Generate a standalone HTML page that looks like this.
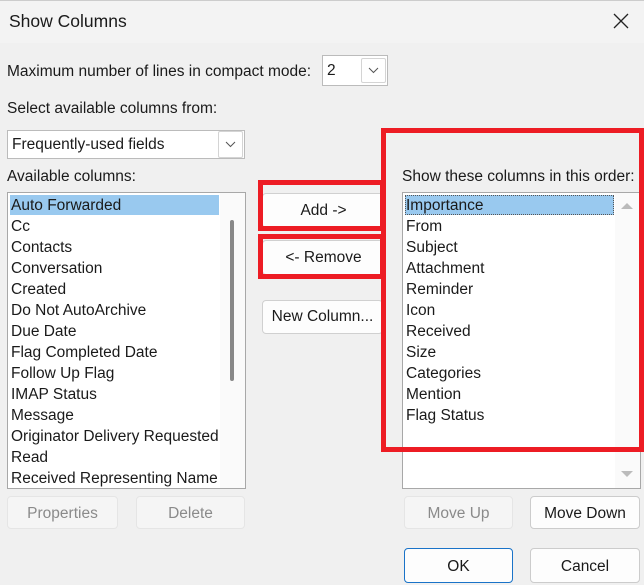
<!DOCTYPE html>
<html><head><style>
*{box-sizing:border-box;margin:0;padding:0}
body{width:644px;height:585px;background:#f0f0f0;font-family:"Liberation Sans",sans-serif;font-size:15.5px;color:#1a1a1a;position:relative;overflow:hidden}
.a{position:absolute}
.t{position:absolute;white-space:nowrap;line-height:20px}
.btn{position:absolute;background:#fdfdfd;border:1px solid #d0d0d0;border-radius:4px;text-align:center;font-size:15.5px}
.dis{background:#f5f5f5;color:#8a8a8a;border-color:#e5e5e5}
.red{position:absolute;border:5px solid #ed1c24}
.list{position:absolute;background:#fff;border:1px solid #a8a8a8}
.row{position:absolute;left:3px;height:21px;line-height:23px;white-space:nowrap}
.chev{position:absolute;border:1px solid #d4d4d4;border-radius:2px;background:#fff}
</style></head><body>
<div class="a" style="left:0;top:0;width:644px;height:43px;background:#f3f3f3;border-top:1px solid #ccc"></div>
<div class="t" style="left:9px;top:11px;font-size:17.5px">Show Columns</div>
<svg class="a" style="left:613px;top:13px" width="16" height="16"><path d="M1 1L15 15M15 1L1 15" stroke="#222" stroke-width="1.3"/></svg>

<div class="t" style="left:7px;top:62px">Maximum number of lines in compact mode:</div>
<div class="a" style="left:322px;top:55px;width:66px;height:31px;background:#fff;border:1px solid #bbb"></div>
<div class="t" style="left:327px;top:61px">2</div>
<div class="chev" style="left:361px;top:58px;width:25px;height:25px"><svg width="23" height="23"><path d="M7 9L11.5 13.5L16 9" fill="none" stroke="#555" stroke-width="1"/></svg></div>

<div class="t" style="left:7px;top:99px">Select available columns from:</div>
<div class="a" style="left:7px;top:130px;width:238px;height:29px;background:#fff;border:1px solid #bbb"></div>
<div class="t" style="left:12px;top:135px">Frequently-used fields</div>
<div class="chev" style="left:218px;top:131px;width:25px;height:27px"><svg width="23" height="25"><path d="M7 10L11.5 14.5L16 10" fill="none" stroke="#555" stroke-width="1"/></svg></div>

<div class="t" style="left:7px;top:167px">Available columns:</div>
<div class="list" style="left:7px;top:192px;width:239px;height:297px;overflow:hidden">
<div class="a" style="left:2px;top:2px;width:209px;height:20px;background:#99c9ef"></div>
<div class="row" style="top:1px">Auto Forwarded</div>
<div class="row" style="top:22px">Cc</div>
<div class="row" style="top:43px">Contacts</div>
<div class="row" style="top:64px">Conversation</div>
<div class="row" style="top:85px">Created</div>
<div class="row" style="top:106px">Do Not AutoArchive</div>
<div class="row" style="top:127px">Due Date</div>
<div class="row" style="top:148px">Flag Completed Date</div>
<div class="row" style="top:169px">Follow Up Flag</div>
<div class="row" style="top:190px">IMAP Status</div>
<div class="row" style="top:211px">Message</div>
<div class="row" style="top:232px;width:208px;overflow:hidden">Originator Delivery Requested</div>
<div class="row" style="top:253px">Read</div>
<div class="row" style="top:274px">Received Representing Name</div>
<div class="a" style="left:212px;top:0;width:25px;height:296px;background:#fafafa"></div>
<div class="a" style="left:222px;top:27px;width:4px;height:161px;background:#888;border-radius:2px"></div>
</div>

<div class="btn" style="left:262px;top:193px;width:123px;height:35px;line-height:33px">Add -&gt;</div>
<div class="btn" style="left:262px;top:240px;width:123px;height:35px;line-height:33px">&lt;- Remove</div>
<div class="btn" style="left:262px;top:300px;width:121px;height:34px;line-height:32px">New Column...</div>

<div class="t" style="left:402px;top:167px">Show these columns in this order:</div>
<div class="list" style="left:402px;top:192px;width:239px;height:297px;overflow:hidden">
<div class="a" style="left:2px;top:2px;width:209px;height:20px;background:#99c9ef;border:1px dotted #555"></div>
<div class="row" style="top:1px">Importance</div>
<div class="row" style="top:22px">From</div>
<div class="row" style="top:43px">Subject</div>
<div class="row" style="top:64px">Attachment</div>
<div class="row" style="top:85px">Reminder</div>
<div class="row" style="top:106px">Icon</div>
<div class="row" style="top:127px">Received</div>
<div class="row" style="top:148px">Size</div>
<div class="row" style="top:169px">Categories</div>
<div class="row" style="top:190px">Mention</div>
<div class="row" style="top:211px">Flag Status</div>
<div class="a" style="left:212px;top:0;width:25px;height:296px;background:#fafafa"></div>
<svg class="a" style="left:217px;top:8px" width="14" height="10"><path d="M1 8L7 2L13 8Z" fill="#bbb"/></svg>
<svg class="a" style="left:217px;top:276px" width="14" height="10"><path d="M1 2L7 8L13 2Z" fill="#bbb"/></svg>
</div>

<div class="btn dis" style="left:7px;top:496px;width:111px;height:33px;line-height:33px">Properties</div>
<div class="btn dis" style="left:136px;top:496px;width:109px;height:33px;line-height:33px">Delete</div>
<div class="btn dis" style="left:404px;top:496px;width:109px;height:33px;line-height:33px">Move Up</div>
<div class="btn" style="left:530px;top:496px;width:110px;height:33px;line-height:33px;border-color:#ccc">Move Down</div>
<div class="btn" style="left:404px;top:548px;width:109px;height:35px;line-height:35px;border-color:#1a73c8">OK</div>
<div class="btn" style="left:530px;top:548px;width:110px;height:35px;line-height:35px;border-color:#ccc">Cancel</div>

<div class="red" style="left:258px;top:180px;width:127px;height:51px"></div>
<div class="red" style="left:258px;top:234px;width:127px;height:45px"></div>
<div class="red" style="left:381px;top:128px;width:263px;height:324px"></div>
</body></html>
